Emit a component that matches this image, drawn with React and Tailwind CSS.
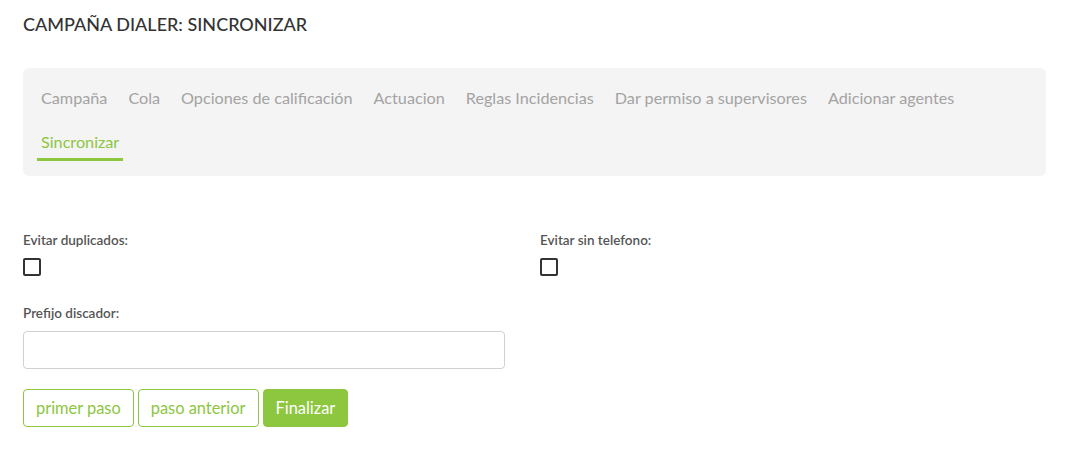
import React from "react";

const tabs = [
  "Campaña",
  "Cola",
  "Opciones de calificación",
  "Actuacion",
  "Reglas Incidencias",
  "Dar permiso a supervisores",
  "Adicionar agentes",
];

const font = { fontFamily: "Lato, 'Noto Sans', sans-serif" };

const App = () => {
  return (
    <div className="w-[1065px] h-[457px] bg-white px-[23px] pt-[13px]" style={font}>
      <h1 className="text-[18px] font-medium text-[#333] leading-[22px]">
        CAMPAÑA DIALER: SINCRONIZAR
      </h1>

      <div className="mt-[33px] w-[1023px] h-[108px] bg-[#f4f4f4] rounded-md px-[14px] pt-[18px]">
        <div className="flex flex-wrap gap-x-[13px]">
          {tabs.map((t) => (
            <div key={t} className="px-1 h-[24px] mb-[20px] text-[16.2px] leading-[24px] text-[#a3a3a3]">
              {t}
            </div>
          ))}
          <div className="px-1 text-[16.2px] leading-[24px] text-[#8dc63f] border-b-[3px] border-[#8dc63f] pb-[4px]">
            Sincronizar
          </div>
        </div>
      </div>

      <div className="grid grid-cols-[517px_1fr] mt-[55px]">
        <div>
          <label className="block text-[13.5px] font-semibold text-[#555] leading-[18px]">
            Evitar duplicados:
          </label>
          <div className="mt-[9px] w-[18px] h-[18px] border-2 border-[#333] rounded-[2px]" />
        </div>
        <div>
          <label className="block text-[13.5px] font-semibold text-[#555] leading-[18px]">
            Evitar sin telefono:
          </label>
          <div className="mt-[9px] w-[18px] h-[18px] border-2 border-[#333] rounded-[2px]" />
        </div>
      </div>

      <label className="block mt-[28px] text-[13.5px] font-semibold text-[#555] leading-[18px]">
        Prefijo discador:
      </label>
      <input className="mt-[9px] block w-[482px] h-[38px] border border-[#d0d0d0] rounded-[4px] bg-white outline-none px-3" />

      <div className="flex gap-[4px] mt-[20px]">
        <button className="h-[38px] px-[12px] border border-[#8dc63f] rounded-[4px] text-[16.4px] text-[#8dc63f] bg-white">
          primer paso
        </button>
        <button className="h-[38px] px-[12px] border border-[#8dc63f] rounded-[4px] text-[16.4px] text-[#8dc63f] bg-white">
          paso anterior
        </button>
        <button className="h-[38px] px-[12px] border border-[#8dc63f] rounded-[4px] text-[16.4px] text-white bg-[#8dc63f]">
          Finalizar
        </button>
      </div>
    </div>
  );
};

export default App;
